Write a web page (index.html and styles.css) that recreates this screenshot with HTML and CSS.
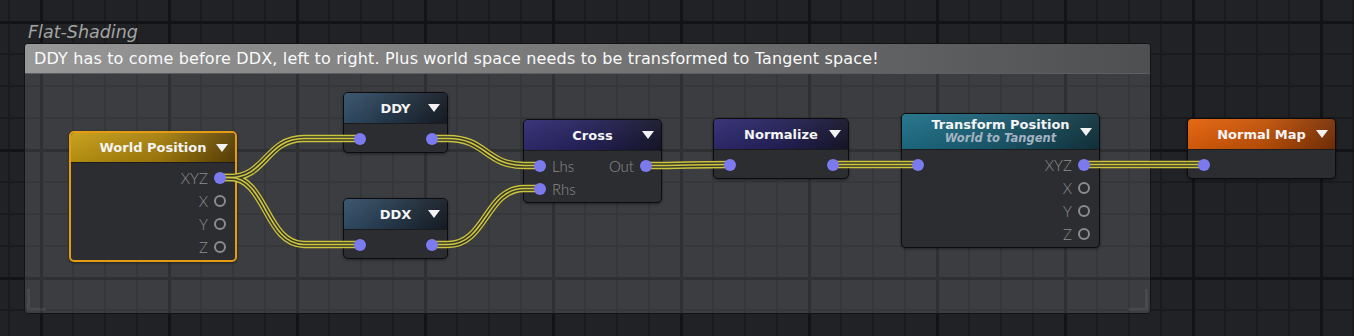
FILE: index.html
```html
<!DOCTYPE html>
<html lang="en">
<head>
    <meta charset="UTF-8">
    <meta name="viewport" content="width=device-width, initial-scale=1.0">
    <title>Flat-Shading</title>
    <link rel="stylesheet" href="styles.css">
</head>
<body>
    <div class="canvas">
        <!-- comment group behind the nodes -->
        <div class="group">
            <div class="group-title">Flat-Shading</div>
            <div class="group-box">
                <div class="group-note">DDY has to come before DDX, left to right. Plus world space needs to be transformed to Tangent space!</div>
                <span class="corner corner-left"></span>
                <span class="corner corner-right"></span>
            </div>
        </div>

        <div class="node node-world selected">
            <div class="node-head head-gold">
                <span class="node-title">World Position</span>
                <span class="caret"></span>
            </div>
            <div class="node-body">
                <div class="row out"><span class="port-label">XYZ</span><span class="port linked"></span></div>
                <div class="row out"><span class="port-label">X</span><span class="port"></span></div>
                <div class="row out"><span class="port-label">Y</span><span class="port"></span></div>
                <div class="row out"><span class="port-label">Z</span><span class="port"></span></div>
            </div>
        </div>

        <div class="node node-ddy">
            <div class="node-head head-slate">
                <span class="node-title">DDY</span>
                <span class="caret"></span>
            </div>
            <div class="node-body">
                <div class="row split"><span class="port linked"></span><span class="port linked"></span></div>
            </div>
        </div>

        <div class="node node-ddx">
            <div class="node-head head-slate">
                <span class="node-title">DDX</span>
                <span class="caret"></span>
            </div>
            <div class="node-body">
                <div class="row split"><span class="port linked"></span><span class="port linked"></span></div>
            </div>
        </div>

        <div class="node node-cross">
            <div class="node-head head-violet">
                <span class="node-title">Cross</span>
                <span class="caret"></span>
            </div>
            <div class="node-body">
                <div class="row split">
                    <span class="pin"><span class="port linked"></span><span class="port-label">Lhs</span></span>
                    <span class="pin"><span class="port-label">Out</span><span class="port linked"></span></span>
                </div>
                <div class="row">
                    <span class="pin"><span class="port linked"></span><span class="port-label">Rhs</span></span>
                </div>
            </div>
        </div>

        <div class="node node-normalize">
            <div class="node-head head-violet">
                <span class="node-title">Normalize</span>
                <span class="caret"></span>
            </div>
            <div class="node-body">
                <div class="row split"><span class="port linked"></span><span class="port linked"></span></div>
            </div>
        </div>

        <div class="node node-transform">
            <div class="node-head head-teal tall">
                <span class="node-title">
                    <span>Transform Position</span>
                    <span class="node-sub">World to Tangent</span>
                </span>
                <span class="caret"></span>
            </div>
            <div class="node-body">
                <div class="row split">
                    <span class="port linked"></span>
                    <span class="pin"><span class="port-label">XYZ</span><span class="port linked"></span></span>
                </div>
                <div class="row out"><span class="port-label">X</span><span class="port"></span></div>
                <div class="row out"><span class="port-label">Y</span><span class="port"></span></div>
                <div class="row out"><span class="port-label">Z</span><span class="port"></span></div>
            </div>
        </div>

        <div class="node node-normalmap">
            <div class="node-head head-orange">
                <span class="node-title">Normal Map</span>
                <span class="caret"></span>
            </div>
            <div class="node-body">
                <div class="row"><span class="port linked"></span></div>
            </div>
        </div>

        <!-- connections, drawn over node bodies but under the ports -->
        <svg class="wires" width="1354" height="336" viewBox="0 0 1354 336">
            <defs>
                <path id="w1" d="M220 177.5 H230 C266 177.5 266 138.5 304 138.5 H360"/>
                <path id="w2" d="M220 177.5 H230 C266 177.5 266 244.5 304 244.5 H360"/>
                <path id="w3" d="M431.5 138.5 H448 C486 138.5 486 165.5 524 165.5 H540"/>
                <path id="w4" d="M431.5 244.5 H448 C486 244.5 486 188.5 524 188.5 H540"/>
                <path id="w5" d="M646 165.5 C688 165.5 688 164.5 730 164.5"/>
                <path id="w6" d="M833 164.5 H918"/>
                <path id="w7" d="M1084 164.5 H1204"/>
            </defs>
            <g class="wire-outer">
                <use href="#w1"/><use href="#w2"/><use href="#w3"/><use href="#w4"/>
                <use href="#w5"/><use href="#w6"/><use href="#w7"/>
            </g>
            <g class="wire-gap">
                <use href="#w1"/><use href="#w2"/><use href="#w3"/><use href="#w4"/>
                <use href="#w5"/><use href="#w6"/><use href="#w7"/>
            </g>
            <g class="wire-core">
                <use href="#w1"/><use href="#w2"/><use href="#w3"/><use href="#w4"/>
                <use href="#w5"/><use href="#w6"/><use href="#w7"/>
            </g>
        </svg>
    </div>
</body>
</html>
```

FILE: styles.css
```css
body {
    margin: 0;
    padding: 0;
    width: 1354px;
    height: 336px;
    overflow: hidden;
    background-color: #202124;
    font-family: "DejaVu Sans", Verdana, sans-serif;
}
.canvas {
    position: relative;
    width: 1354px;
    height: 336px;
    background-color: #212225;
    background-image:
        linear-gradient(90deg, #121315 0 3px, transparent 3px),
        linear-gradient(180deg, #121315 0 3px, transparent 3px),
        linear-gradient(90deg, #1a1b1d 0 2px, transparent 2px),
        linear-gradient(180deg, #1a1b1d 0 2px, transparent 2px);
    background-size: 128px 128px, 128px 128px, 32px 32px, 32px 32px;
    background-position: 40px 0, 0 21px, 8px 0, 0 21px;
}

/* comment group */
.group {
    position: absolute;
    left: 24px;
    top: 22px;
    width: 1127px;
}
.group-title {
    height: 21px;
    line-height: 21px;
    padding-left: 4px;
    font-size: 17.5px;
    font-style: italic;
    color: #a4a4a4;
}
.group-box {
    position: relative;
    height: 271px;
    box-sizing: border-box;
    border: 1px solid #131314;
    border-radius: 4px;
    background: rgba(255, 255, 255, 0.125);
}
.group-note {
    height: 29px;
    line-height: 29px;
    padding-left: 9px;
    border-radius: 3px 3px 0 0;
    border-bottom: 1px solid #5e5e60;
    background: linear-gradient(90deg, #989898, #767677 50%, #4e4f51);
    color: #fafafa;
    font-size: 16px;
    letter-spacing: 0.15px;
    white-space: nowrap;
}
.corner {
    position: absolute;
    bottom: 2px;
    width: 16px;
    height: 19px;
    border-bottom: 3px solid rgba(255, 255, 255, 0.07);
}
.corner-left {
    left: 2px;
    border-left: 3px solid rgba(255, 255, 255, 0.07);
}
.corner-right {
    right: 2px;
    border-right: 3px solid rgba(255, 255, 255, 0.07);
}

/* nodes */
.node {
    position: absolute;
    box-sizing: border-box;
    border: 1px solid #0c0c0e;
    border-radius: 5px;
    background: #2c2d30;
    box-shadow: 0 1px 3px rgba(0, 0, 0, 0.45);
}
.node.selected {
    border: 2px solid #e39c13;
}
.node-head {
    display: grid;
    grid-template-columns: 1fr auto 1fr;
    align-items: center;
    height: 30px;
    border-radius: 4px 4px 0 0;
    box-shadow: 0 1px 0 #1b1b1d;
    color: #f4f4f4;
    font-size: 13px;
    font-weight: bold;
    white-space: nowrap;
}
.selected .node-head {
    height: 29px;
    border-radius: 3px 3px 0 0;
}
.node-head.tall {
    height: 35px;
}
.node-title {
    grid-column: 2;
    display: flex;
    flex-direction: column;
    align-items: center;
    line-height: 13px;
}
.node-sub {
    margin-top: 1px;
    font-size: 11.5px;
    font-style: italic;
    color: #a3b4c2;
}
.caret {
    grid-column: 3;
    justify-self: end;
    width: 0;
    height: 0;
    margin-right: 7px;
    border-left: 6px solid transparent;
    border-right: 6px solid transparent;
    border-top: 8px solid #f2f2f2;
}
.head-gold {
    background: linear-gradient(180deg, rgba(255, 255, 255, 0.06), rgba(0, 0, 0, 0.1)),
        linear-gradient(90deg, #c59c12, #a67e0c 55%, #5c4206);
}
.head-slate {
    background: linear-gradient(180deg, rgba(255, 255, 255, 0.05), rgba(0, 0, 0, 0.1)),
        linear-gradient(90deg, #34506a, #243749 50%, #171d26);
}
.head-violet {
    background: linear-gradient(180deg, rgba(255, 255, 255, 0.05), rgba(0, 0, 0, 0.1)),
        linear-gradient(90deg, #302c72, #242159 50%, #17162a);
}
.head-teal {
    background: linear-gradient(180deg, rgba(255, 255, 255, 0.05), rgba(0, 0, 0, 0.1)),
        linear-gradient(90deg, #1f7189, #1a5a6e 50%, #13343f);
}
.head-orange {
    background: linear-gradient(180deg, rgba(255, 255, 255, 0.05), rgba(0, 0, 0, 0.1)),
        linear-gradient(90deg, #e4620a, #c55308 50%, #7a3106);
}
.node-body {
    padding: 4px 9px 2px 10px;
}
.row {
    display: flex;
    align-items: center;
    height: 23px;
}
.row.out {
    justify-content: flex-end;
}
.row.split {
    justify-content: space-between;
}
.pin {
    display: flex;
    align-items: center;
    gap: 6px;
}
.row.out .port-label {
    margin-right: 6px;
}
.port-label {
    font-family: "Lato", "Open Sans", sans-serif;
    font-weight: 300;
    font-size: 15px;
    color: #8d8d8d;
}
.port {
    position: relative;
    z-index: 3;
    width: 12px;
    height: 12px;
    box-sizing: border-box;
    border-radius: 50%;
    border: 2.5px solid #8c8c8c;
}
.port.linked {
    border: none;
    background: #7b7bef;
}

.node-world { left: 69px; top: 131px; width: 168px; }
.node-ddy { left: 343px; top: 92px; width: 105px; }
.node-ddx { left: 343px; top: 198px; width: 105px; }
.node-cross { left: 523px; top: 119px; width: 139px; }
.node-normalize { left: 713px; top: 118px; width: 136px; }
.node-transform { left: 901px; top: 113px; width: 199px; }
.node-normalmap { left: 1187px; top: 118px; width: 149px; }

/* wires: three yellow strands made from stacked strokes */
.wires {
    position: absolute;
    left: 0;
    top: 0;
    z-index: 2;
    pointer-events: none;
    fill: none;
}
.wire-outer {
    stroke: #cbc43e;
    stroke-width: 7.3;
}
.wire-gap {
    stroke: #393829;
    stroke-width: 4.7;
}
.wire-core {
    stroke: #cfc842;
    stroke-width: 1.6;
}
```
